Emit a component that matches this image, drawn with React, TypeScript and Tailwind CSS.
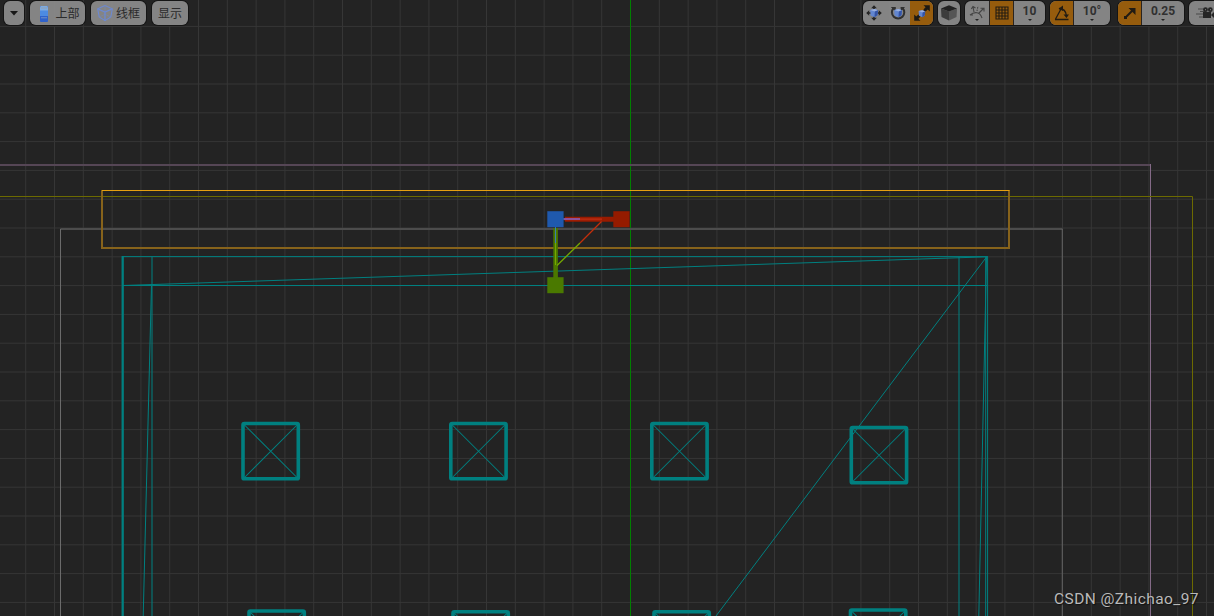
import type { ReactNode } from "react";

const STEP = 28.8;
const TEAL = "#008080";

const columns = Array.from({ length: 43 }, (_, i) => 630.5 + (i - 22) * STEP);
const rows = Array.from({ length: 21 }, (_, i) => 26.4 + i * STEP);

const pillars = [
  { x: 243, y: 423.5 },
  { x: 450.8, y: 423.5 },
  { x: 651.8, y: 423.5 },
  { x: 851.3, y: 427.5 },
  { x: 249, y: 611 },
  { x: 453, y: 611.8 },
  { x: 654, y: 611.8 },
  { x: 850.5, y: 610 },
];

function Pillar({ x, y }: { x: number; y: number }) {
  return (
    <g transform={`translate(${x} ${y})`} stroke={TEAL} fill="none">
      <path d="M0 0L55.5 55.5M55.5 0L0 55.5" strokeWidth="1.05" />
      <rect width="55.3" height="55.3" rx="1.4" strokeWidth="3.6" />
    </g>
  );
}

function Scene() {
  return (
    <svg
      width="1214"
      height="616"
      viewBox="0 0 1214 616"
      fill="none"
      className="block"
    >
      <rect width="1214" height="616" fill="#232323" />
      <g stroke="#363636">
        {columns.map((x) => (
          <path key={x} d={`M${x} 0V616`} />
        ))}
        {rows.map((y) => (
          <path key={y} d={`M0 ${y}H1214`} />
        ))}
      </g>
      <path d="M630.5 0V616" stroke="#008000" />

      {/* Volume bounds */}
      <path d="M0 165H1150" stroke="#554655" strokeWidth="2" />
      <path d="M1150.5 164V616" stroke="#846a87" />
      <path d="M0 196.5H1192.5V616" stroke="#6c6a00" />
      <path d="M60.5 229H1062.5" stroke="#4c4c4c" strokeWidth="2" />
      <path d="M60.5 229V616" stroke="#6b6b6b" />
      <path d="M1062.3 229V616" stroke="#606060" strokeWidth="1.1" />

      {/* Building wireframe */}
      <g stroke={TEAL}>
        <path d="M122 256.6H988M123 285.5H987" />
        <path d="M122.7 256V616" strokeWidth="2.3" />
        <path d="M152 257V616M959 257V616" strokeWidth="1.2" opacity="0.85" />
        <path d="M151.5 284L143.2 616M986.5 257L978.8 616" />
        <path d="M985.7 257V616M987.6 257V616" />
        <path d="M123 285.5L987 256.8M986.5 257L716 616" />
      </g>
      {pillars.map((p) => (
        <Pillar key={`${p.x}-${p.y}`} {...p} />
      ))}

      {/* Selected mesh */}
      <path
        d="M102 191V248H1009V190"
        stroke="#87631b"
        strokeWidth="2"
      />
      <path d="M101.5 190.5H1009.5" stroke="#e5a011" />

      {/* Scale gizmo */}
      <path d="M565 219.2H614" stroke="#981b00" strokeWidth="5" />
      <path d="M564 219.2H602" stroke="#b62a10" strokeWidth="2" />
      <path d="M563 219H580" stroke="#8060c8" strokeWidth="1.5" />
      <path d="M555.6 228V278" stroke="#4b7800" strokeWidth="4.6" />
      <path d="M555.5 227V243" stroke="#3b7fae" />
      <path d="M555.5 243V265" stroke="#75a900" />
      <path d="M601.5 221.5L580 243" stroke="#c42e0b" strokeWidth="1.3" />
      <path d="M580 243L557 265.5" stroke="#75a900" strokeWidth="1.3" />
      <rect x="547.3" y="211.2" width="16.3" height="16" fill="#1f59ad" />
      <rect x="613.3" y="211.2" width="16.3" height="16" fill="#951b00" />
      <rect x="547.3" y="277.2" width="16.3" height="16" fill="#4a7900" />
    </svg>
  );
}

function Group({
  className,
  children,
}: {
  className: string;
  children: ReactNode;
}) {
  return (
    <div
      className={`flex h-6 shrink-0 items-stretch overflow-hidden rounded-[6px] bg-[#8a8a8a]/95 text-[#2b2b2b] shadow-[0_0_0_1px_#151515] ${className}`}
    >
      {children}
    </div>
  );
}

function IconCell({
  active,
  className = "",
  children,
}: {
  active?: boolean;
  className?: string;
  children: ReactNode;
}) {
  return (
    <div
      className={`flex shrink-0 items-center justify-center ${active ? "bg-[#965c0d]" : ""} ${className || "w-6"}`}
    >
      <svg
        width="18"
        height="18"
        viewBox="0 0 18 18"
        fill="none"
        className="shrink-0"
      >
        {children}
      </svg>
    </div>
  );
}

function ValueCell({ value }: { value: string }) {
  return (
    <div className="flex flex-1 flex-col items-center border-l border-[#292420] font-['Roboto','Noto_Sans',sans-serif] text-[12px] leading-[20px] font-bold text-[#303030]">
      {value}
      <svg width="4" height="2" viewBox="0 0 4 2" className="-mt-[2px]">
        <path d="M0 0H4L2 2Z" fill="#222" />
      </svg>
    </div>
  );
}

function BlueCube() {
  return (
    <g>
      <path d="M5.2 6L9.5 5L13 6.2L12.5 11.2L9.5 13.3L5.6 11.6Z" fill="#6286d0" />
      <path d="M5.2 6L9.5 5L13 6.2L9.8 7.6Z" fill="#9bb1de" />
      <path d="M13 6.2L12.5 11.2L9.5 13.3L9.8 7.6Z" fill="#3454a6" />
    </g>
  );
}

function LeftTools() {
  return (
    <div className="flex gap-1.5 text-[12px] font-['Noto_Sans_CJK_SC',sans-serif]">
      <Group className="w-5 items-center justify-center">
        <svg
          width="8"
          height="5"
          viewBox="0 0 8 5"
          className="self-center"
        >
          <path d="M0 0H8L4 4.5Z" fill="#171717" />
        </svg>
      </Group>
      <Group className="w-[55px]">
        <div className="flex items-center pl-2.5">
          <svg width="8" height="17" viewBox="0 0 8 17" fill="none">
            <rect y="1" width="8" height="16" rx="1" fill="#2f62cb" />
            <path d="M0 3Q0 1 1 1H7Q8 1 8 3V7H0Z" fill="#7eabe0" />
            <path d="M0 5.5H8V11H0Z" fill="#4d8be2" />
            <path d="M1 3H7" stroke="#8f9fb2" />
            <path d="M1 12.8H7" stroke="#7192c6" />
          </svg>
          <span className="ml-[7.5px] leading-6">上部</span>
        </div>
      </Group>
      <Group className="w-[55px]">
        <div className="flex items-center pl-1.5">
          <svg
            width="16"
            height="18"
            viewBox="0 0 16 18"
            fill="none"
            stroke="#6d89d0"
            strokeWidth="1.1"
          >
            <path d="M0.7 4.8L8 1.5L15.3 4.8L13.8 13L8 16.7L2.2 13Z" />
            <path d="M0.7 4.8L8 8L15.3 4.8M8 8V16.7" strokeWidth="1.3" />
            <path d="M8 1.5V10.3L2.2 13M8 10.3L13.8 13" strokeWidth="0.4" />
          </svg>
          <span className="ml-[3px] leading-6">线框</span>
        </div>
      </Group>
      <Group className="w-9 justify-center">
        <span className="leading-6">显示</span>
      </Group>
    </div>
  );
}

function RightTools() {
  return (
    <div className="flex">
      <Group className="w-[70px]">
        <IconCell className="w-[23px] pr-[2px]">
          <path
            d="M9 2V16M2 9H16"
            stroke="#252525"
            strokeWidth="1.6"
          />
          <path
            d="M6.2 4.2L9 1.2L11.8 4.2ZM6.2 13.8L9 16.8L11.8 13.8ZM4.2 6.2L1.2 9L4.2 11.8ZM13.8 6.2L16.8 9L13.8 11.8Z"
            fill="#252525"
          />
          <BlueCube />
        </IconCell>
        <IconCell>
          <path
            d="M4.5 4.2A6.2 6.2 0 1 0 13.7 4.2"
            stroke="#303030"
            strokeWidth="2"
          />
          <path d="M1.8 3H6.8V8ZM11.5 3H16L12 7.5Z" fill="#303030" />
          <BlueCube />
        </IconCell>
        <IconCell active className="w-[23px]">
          <path d="M3.5 14.5L14.5 3.5" stroke="#1e1a14" strokeWidth="2" />
          <path
            d="M10.5 1.2H16.8V7.5L14.7 5.4L12.6 7.5L10.5 5.4L12.6 3.3ZM1.2 10.5V16.8H7.5L5.4 14.7L7.5 12.6L5.4 10.5L3.3 12.6Z"
            fill="#1e1a14"
          />
          <g transform="translate(1.2 2) scale(0.85)">
            <BlueCube />
          </g>
        </IconCell>
      </Group>
      <Group className="ml-[5px] w-[22px]">
        <IconCell className="w-[22px]">
          <path d="M1 4.5L9 7.5V16.5L1.5 13Z" fill="#3c3c3c" />
          <path d="M17 4.5L9 7.5V16.5L16.5 13Z" fill="#555" />
          <path d="M1 4.5L9 1.2L17 4.5L9 7.5Z" fill="#212121" />
        </IconCell>
      </Group>
      <Group className="ml-[5px] w-20">
        <IconCell>
          <g stroke="#444" strokeWidth="1.1">
            <path d="M2 11C7 7 12 8 14 14M2 11H5" />
            <path d="M6 8L5 3M3.3 5L5 2.5L7.5 4M10.5 9.5L15.5 4.5M12.5 4.2H16V7.5" />
            <path d="M9 7L10 2" strokeDasharray="1.5 1" />
          </g>
          <path d="M7 15H11L9 17Z" fill="#222" />
        </IconCell>
        <IconCell active className="w-6 border-l border-[#292420]">
          <path
            d="M3 3H15V15H3ZM6 3V15M9 3V15M12 3V15M3 6H15M3 9H15M3 12H15"
            stroke="#251d13"
            strokeWidth="1.1"
          />
        </IconCell>
        <ValueCell value="10" />
      </Group>
      <Group className="ml-[5px] w-[60px]">
        <IconCell active className="w-[23px]">
          <path
            d="M2 15.5H15.5M2.3 15.5L8.5 4M6 4.5C11 4.5 13 7 13.5 12"
            stroke="#211b13"
            strokeWidth="1.3"
          />
          <path d="M5.5 4.8L10 1.5V7ZM10.5 10.5H16L13.5 14Z" fill="#211b13" />
        </IconCell>
        <ValueCell value="10°" />
      </Group>
      <Group className="ml-2 w-[66px]">
        <IconCell active className="w-[23px]">
          <path d="M5.5 12.5L12 6" stroke="#211b13" strokeWidth="2" />
          <path d="M7.5 4H14.5V11ZM3 12H6V15H3Z" fill="#211b13" />
        </IconCell>
        <ValueCell value="0.25" />
      </Group>
      <Group className="ml-[5px] w-10">
        <IconCell className="ml-[7px] w-[18px]">
          <path
            d="M2 5H8M4 7.5H9M0 10H8M3 13H9"
            stroke="#484848"
            strokeWidth="1.1"
          />
          <circle cx="9.5" cy="5.7" r="2.4" fill="#252525" />
          <circle cx="14.3" cy="5.7" r="2.4" fill="#252525" />
          <path d="M7 8H15V14H7Z" fill="#252525" />
          <path d="M15 11L18 8V14Z" fill="#252525" />
          <path d="M9 5.7H10M14 5.7H15" stroke="#858585" />
        </IconCell>
      </Group>
    </div>
  );
}

export default function App() {
  return (
    <main className="relative h-[616px] w-[1214px] overflow-hidden bg-[#232323]">
      <Scene />
      {/* Viewport toolbar */}
      <header className="absolute inset-x-0 top-px flex pl-1">
        <LeftTools />
        <div className="ml-[675px]">
          <RightTools />
        </div>
      </header>
      <span className="absolute right-[15px] bottom-[7px] text-[15.5px] leading-5 tracking-[0.42px] whitespace-nowrap text-[#b9b9b9] font-['Roboto','Liberation_Sans',sans-serif] [text-shadow:1px_1px_1px_#111]">
        CSDN @Zhichao_97
      </span>
    </main>
  );
}
